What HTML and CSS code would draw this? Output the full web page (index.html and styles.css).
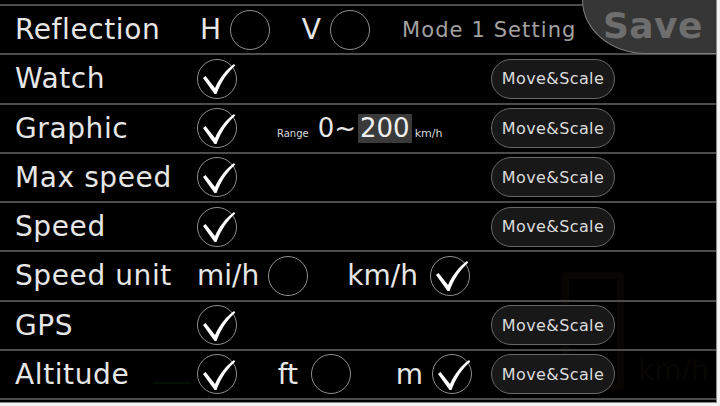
FILE: index.html
```html
<!DOCTYPE html>
<html>
<head>
<meta charset="utf-8">
<link rel="stylesheet" href="styles.css">
</head>
<body>
<div class="screen">
  <div class="hud">
    <div class="hud-digit"></div>
    <div class="hud-unit">km/h</div>
    <div class="hud-bar"></div>
  </div>
  <div class="save"><span>Save</span></div>
  <div class="list">
    <div class="row">
      <div class="label">Reflection</div>
      <div class="opt w33">H</div>
      <span class="radio"></span>
      <div class="opt w60">V</div>
      <span class="radio"></span>
      <div class="mode">Mode 1 Setting</div>
    </div>
    <div class="row">
      <div class="label">Watch</div>
      <span class="radio checked"><svg viewBox="0 0 40 40"><path d="M6,20 L8.5,18 L18,30 C23,19 29,12 37,6 L38.3,7.5 C30,15 24,24 19.5,36 L17.5,36 Z"/></svg></span>
      <button class="btn">Move&amp;Scale</button>
    </div>
    <div class="row">
      <div class="label">Graphic</div>
      <span class="radio checked"><svg viewBox="0 0 40 40"><path d="M6,20 L8.5,18 L18,30 C23,19 29,12 37,6 L38.3,7.5 C30,15 24,24 19.5,36 L17.5,36 Z"/></svg></span>
      <div class="range">
        <span class="range-lbl">Range</span>
        <span class="range-num">0~</span>
        <span class="range-val">200</span>
        <span class="range-unit">km/h</span>
      </div>
      <button class="btn">Move&amp;Scale</button>
    </div>
    <div class="row">
      <div class="label">Max speed</div>
      <span class="radio checked"><svg viewBox="0 0 40 40"><path d="M6,20 L8.5,18 L18,30 C23,19 29,12 37,6 L38.3,7.5 C30,15 24,24 19.5,36 L17.5,36 Z"/></svg></span>
      <button class="btn">Move&amp;Scale</button>
    </div>
    <div class="row">
      <div class="label">Speed</div>
      <span class="radio checked"><svg viewBox="0 0 40 40"><path d="M6,20 L8.5,18 L18,30 C23,19 29,12 37,6 L38.3,7.5 C30,15 24,24 19.5,36 L17.5,36 Z"/></svg></span>
      <button class="btn">Move&amp;Scale</button>
    </div>
    <div class="row">
      <div class="label">Speed unit</div>
      <div class="opt w71">mi/h</div>
      <span class="radio"></span>
      <div class="opt w122">km/h</div>
      <span class="radio checked"><svg viewBox="0 0 40 40"><path d="M6,20 L8.5,18 L18,30 C23,19 29,12 37,6 L38.3,7.5 C30,15 24,24 19.5,36 L17.5,36 Z"/></svg></span>
    </div>
    <div class="row">
      <div class="label">GPS</div>
      <span class="radio checked"><svg viewBox="0 0 40 40"><path d="M6,20 L8.5,18 L18,30 C23,19 29,12 37,6 L38.3,7.5 C30,15 24,24 19.5,36 L17.5,36 Z"/></svg></span>
      <button class="btn">Move&amp;Scale</button>
    </div>
    <div class="row last">
      <div class="label">Altitude</div>
      <span class="radio checked"><svg viewBox="0 0 40 40"><path d="M6,20 L8.5,18 L18,30 C23,19 29,12 37,6 L38.3,7.5 C30,15 24,24 19.5,36 L17.5,36 Z"/></svg></span>
      <div class="opt w74">ft</div>
      <span class="radio"></span>
      <div class="opt w81">m</div>
      <span class="radio checked"><svg viewBox="0 0 40 40"><path d="M6,20 L8.5,18 L18,30 C23,19 29,12 37,6 L38.3,7.5 C30,15 24,24 19.5,36 L17.5,36 Z"/></svg></span>
      <button class="btn">Move&amp;Scale</button>
    </div>
  </div>
</div>
</body>
</html>
```
FILE: styles.css
```css
* { box-sizing: border-box; }
html, body { margin: 0; padding: 0; }
body {
  background: #f2f2f2;
  width: 720px;
  height: 406px;
  overflow: hidden;
  font-family: "DejaVu Sans", "Liberation Sans", sans-serif;
}
.screen {
  position: relative;
  width: 717px;
  height: 403px;
  background: #000;
  border-right: 1px solid #8a8a8a;
  border-bottom: 1px solid #8a8a8a;
  overflow: hidden;
}
.hud { position: absolute; inset: 0; z-index: 0; }
.hud-digit {
  position: absolute; left: 562px; top: 272px; width: 62px; height: 118px;
  border: 7px solid #080602; border-radius: 4px;
}
.hud-unit {
  position: absolute; left: 638px; top: 354px;
  font-size: 28px; color: #080603;
}
.hud-bar {
  position: absolute; left: 153px; top: 382px; width: 38px; height: 2px;
  background: #041004;
}
.list { position: relative; z-index: 1; padding-top: 4px; }
.row {
  display: flex;
  align-items: center;
  height: 49.25px;
  border-top: 2px solid #4c4c4c;
  padding-left: 15px;
  padding-right: 101px;
  color: #e6e6e6;
  font-size: 28px;
}
.row.last { border-bottom: 2px solid #4c4c4c; height: 51.25px; }
.label { width: 182px; flex: none; white-space: nowrap; letter-spacing: 0.6px; }
.opt { flex: none; text-align: right; padding-right: 10px; white-space: nowrap; }
.w33 { width: 33px; padding-right: 9px; }
.w60 { width: 60px; padding-right: 9px; }
.w71 { width: 71px; }
.w122 { width: 122px; padding-right: 12px; }
.w74 { width: 74px; padding-right: 13px; }
.w81 { width: 81px; padding-right: 9px; }
.radio {
  flex: none;
  position: relative;
  width: 40px; height: 40px;
  border: 1.5px solid #8e8e8e;
  border-radius: 50%;
}
.radio svg {
  position: absolute; left: -1.5px; top: -1.5px;
  width: 40px; height: 40px; overflow: visible;
}
.radio svg path { fill: #fff; }
.mode {
  margin-left: 32px;
  font-size: 21px;
  color: #a2a2a2;
  letter-spacing: 1.1px;
  white-space: nowrap;
}
.save {
  position: absolute; top: 0; right: 0; z-index: 2;
  width: 134px; height: 54px;
  background: #363636;
  border-left: 1.5px solid #7c7c7c;
  border-bottom: 1.5px solid #7c7c7c;
  border-bottom-left-radius: 64px 54px;
  display: flex; align-items: center; justify-content: flex-end;
  padding-right: 13px; padding-bottom: 2px;
}
.save span {
  font-weight: bold; font-size: 36px; color: #6e6e6e; letter-spacing: 0.5px;
}
.btn {
  margin-left: auto;
  flex: none;
  width: 124px; height: 40px;
  border-radius: 20px;
  border: 1.5px solid #686868;
  background: #181818;
  color: #dcdcdc;
  font-family: "DejaVu Sans", sans-serif;
  font-size: 16px;
  letter-spacing: 0.4px;
  padding: 0;
}
.range {
  margin-left: 40px;
  display: flex; align-items: baseline;
  white-space: nowrap;
}
.range-lbl { font-size: 10px; color: #dadada; margin-right: 9px; }
.range-num { font-size: 26px; color: #e6e6e6; margin-right: 2px; }
.range-val {
  font-size: 26px; color: #f0f0f0; background: #3a3a3a;
  padding: 0 2px; line-height: 29px;
}
.range-unit { font-size: 11px; color: #dadada; margin-left: 3px; }
```
